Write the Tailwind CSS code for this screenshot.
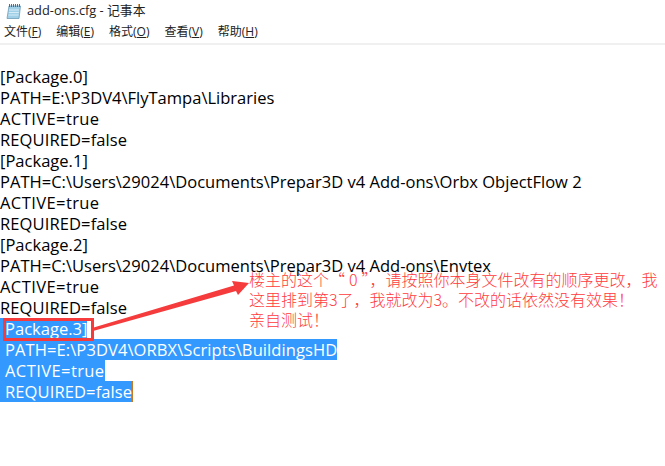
<!DOCTYPE html>
<html lang="zh-CN">
<head>
  <meta charset="UTF-8" />
  <title>add-ons.cfg - 记事本</title>
  <script src="https://cdn.jsdelivr.net/npm/@tailwindcss/browser@4"></script>
</head>
<body class="relative w-[665px] h-[466px] overflow-hidden bg-white text-black font-['Open_Sans','Noto_Sans_CJK_SC',sans-serif]">

  <!-- title bar -->
  <div class="flex items-center h-[21px] pl-[6px] gap-[6px] text-[12.8px] text-[#222]">
    <svg width="15" height="16" viewBox="0 0 15 16">
      <path d="M3 3H14.5L13 15.5H1Z" fill="#9fd0e8" stroke="#6f9db8" stroke-width="0.8" />
      <path d="M3 7h10M2.8 9.5h10M2.5 12h10" stroke="#d5ecf7" stroke-width="1" />
      <path d="M3.5 1v3M5.5 1v3M7.5 1v3M9.5 1v3M11.5 1v3M13.5 1v3" stroke="#555c66" stroke-width="0.9" />
    </svg>
    <span>add-ons.cfg - 记事本</span>
  </div>

  <!-- menu -->
  <div class="flex items-center h-[24px] pl-[4px] gap-[15px] text-[12px] text-[#222] border-b-2 border-[#f0f0f0]">
    <span>文件(<u>F</u>)</span>
    <span>编辑(<u>E</u>)</span>
    <span>格式(<u>O</u>)</span>
    <span>查看(<u>V</u>)</span>
    <span>帮助(<u>H</u>)</span>
  </div>

  <!-- file text -->
  <div class="pt-[21px] text-[16.55px] leading-[21px]">
    <div>[Package.0]</div>
    <div>PATH=E:\P3DV4\FlyTampa\Libraries</div>
    <div class="tracking-[0.4px]">ACTIVE=true</div>
    <div class="tracking-[0.1px]">REQUIRED=false</div>
    <div>[Package.1]</div>
    <div>PATH=C:\Users\29024\Documents\Prepar3D v4 Add-ons\Orbx ObjectFlow 2</div>
    <div class="tracking-[0.4px]">ACTIVE=true</div>
    <div class="tracking-[0.1px]">REQUIRED=false</div>
    <div>[Package.2]</div>
    <div>PATH=C:\Users\29024\Documents\Prepar3D v4 Add-ons\Envtex</div>
    <div class="tracking-[0.4px]">ACTIVE=true</div>
    <div class="tracking-[0.1px]">REQUIRED=false</div>
    <div><span class="inline-block bg-[#3399ff] text-white pl-[5px]">Package.3]</span></div>
    <div><span class="inline-block bg-[#3399ff] text-white pl-[5px] tracking-[0.08px]">PATH=E:\P3DV4\ORBX\Scripts\BuildingsHD</span></div>
    <div><span class="inline-block bg-[#3399ff] text-white pl-[5px] tracking-[0.4px]">ACTIVE=true</span></div>
    <div><span class="inline-block bg-[#3399ff] text-white pl-[5px] tracking-[0.1px] border-r border-[#c87820]">REQUIRED=false</span></div>
  </div>

  <!-- annotation overlay -->
  <div class="absolute left-[3px] top-[318px] w-[91px] h-[23px] border-[3px] border-[#f53b3b]"></div>
  <svg class="absolute left-0 top-0" width="665" height="466" viewBox="0 0 665 466">
    <path d="M92 328L234 285.5L232 281L249 283L238 295L236 291L93 331Z" fill="#f53b3b" />
  </svg>
  <div class="absolute left-[249px] top-[269px] whitespace-nowrap text-[16px] leading-[20px] text-[#ff3b3b] font-light font-['Noto_Sans_CJK_SC',sans-serif]">
    <div>楼主的这个“<span class="px-[4px]">0</span>”，请按照你本身文件改有的顺序更改，我</div>
    <div>这里排到第3了，我就改为3。不改的话依然没有效果！</div>
    <div>亲自测试！</div>
  </div>
</body>
</html>
